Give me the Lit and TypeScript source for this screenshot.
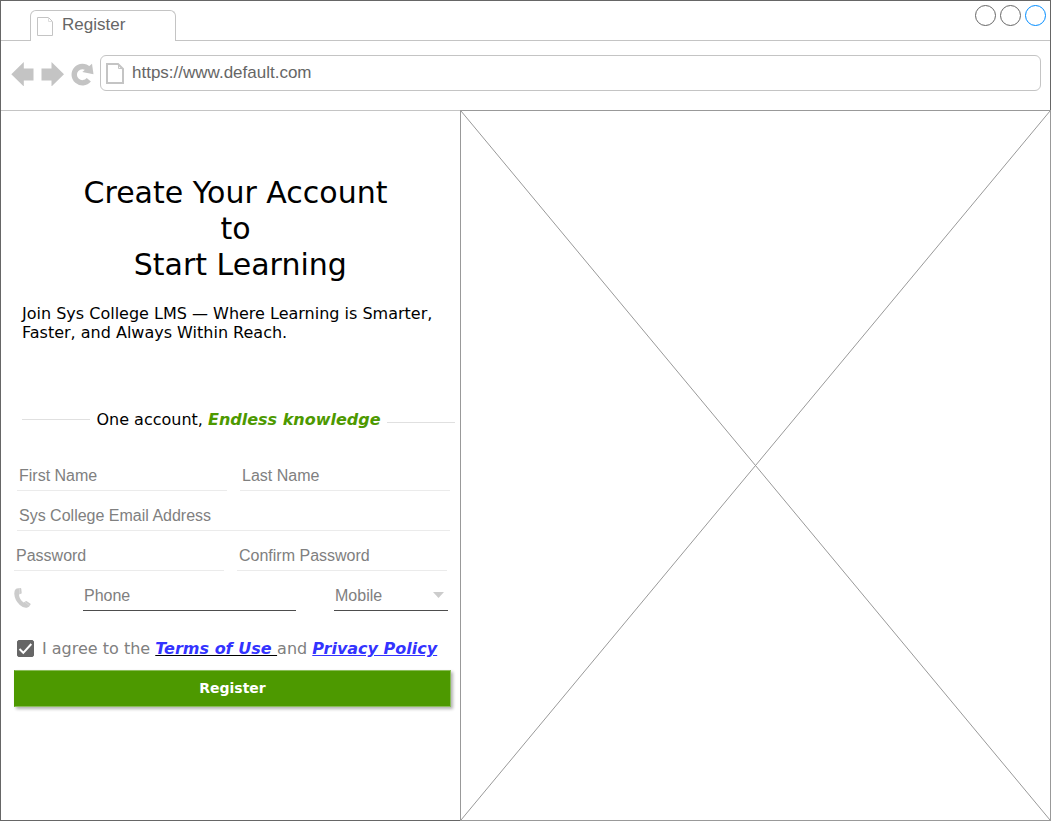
import { LitElement, html, css } from "lit";
import { customElement, state } from "lit/decorators.js";

@customElement("browser-chrome")
class BrowserChrome extends LitElement {
  static styles = css`
    :host {
      display: block;
      font: 17px/20px "Liberation Sans", Arial, sans-serif;
      color: #666;
    }
    svg { display: block; flex: none; }
    .strip { display: flex; height: 40px; }
    .lead { width: 29px; border-bottom: 1px solid #c4c4c4; box-sizing: border-box; }
    .tab {
      display: flex;
      gap: 9px;
      box-sizing: border-box;
      width: 146px;
      margin: 9px 0 0;
      padding: 4px 6px 0;
      border: 1px solid #c4c4c4;
      border-bottom: 0;
      border-radius: 6px 6px 0 0;
    }
    .tab svg { margin-top: 2px; }
    .rest {
      display: flex;
      flex: 1;
      justify-content: flex-end;
      gap: 4px;
      box-sizing: border-box;
      padding: 4px 4px 0;
      border-bottom: 1px solid #c4c4c4;
    }
    .dot {
      box-sizing: border-box;
      width: 21px;
      height: 21px;
      padding: 0;
      border: 1px solid #666;
      border-radius: 50%;
      background: none;
    }
    .accent { border-color: #008cff; }
    .bar {
      display: flex;
      align-items: center;
      padding: 14px 9px 19px 9px;
      border-bottom: 1px solid #c4c4c4;
    }
    .nav { border: 0; padding: 0; margin: 0 6px 0 0; background: none; }
    .address {
      display: flex;
      flex: 1;
      align-items: center;
      gap: 8px;
      box-sizing: border-box;
      height: 36px;
      padding: 0 5px;
      border: 1px solid #c4c4c4;
      border-radius: 6px;
    }
    .url {
      flex: 1;
      min-width: 0;
      height: 20px;
      padding: 0;
      border: 0;
      outline: 0;
      background: none;
      color: inherit;
      font: inherit;
    }
  `;

  render() {
    return html`
      <div class="strip">
        <div class="lead"></div>
        <div class="tab">
          <svg width="16" height="19" viewBox="0 0 16 19" fill="none" stroke="#c4c4c4">
            <path d="M.5.5H11.5L15.5 4.5V18.5H.5Z" />
            <path d="M11.5.5V4.5H15.5" stroke="#ddd" />
          </svg>
          <span>Register</span>
        </div>
        <div class="rest">
          <button class="dot" aria-label="Minimize"></button>
          <button class="dot" aria-label="Maximize"></button>
          <button class="dot accent" aria-label="Close"></button>
        </div>
      </div>
      <div class="bar">
        <button class="nav" aria-label="Back">
          <svg width="24" height="26" viewBox="0 0 24 26" fill="#c4c4c4">
            <path d="M1.300 14.300L13.800 2V8.500H23.500V20.500H13.800V26.500Z" />
          </svg>
        </button>
        <button class="nav" aria-label="Forward">
          <svg width="24" height="26" viewBox="0 0 24 26" fill="#c4c4c4">
            <path d="M24 14.300L11.500 2V8.500H1.500V20.500H11.500V26.500Z" />
          </svg>
        </button>
        <button class="nav" aria-label="Reload">
          <svg width="24" height="26" viewBox="0 0 24 26">
            <path d="M18.800 19.800A8.200 8.200 0 1 1 18.200 8.800" fill="none" stroke="#c4c4c4" stroke-width="5.400" />
            <path d="M22 3.700L23.500 14.200L12.300 12Z" fill="#c4c4c4" />
          </svg>
        </button>
        <div class="address">
          <svg width="18" height="21" viewBox="0 0 18 21" fill="none" stroke="#c4c4c4" stroke-width="2">
            <path d="M1 1H12L17 6V20H1Z" />
            <path d="M12.500 1V5.500H17" stroke-width="1" />
          </svg>
          <input class="url" type="text" aria-label="Address" value="https://www.default.com" />
        </div>
      </div>
    `;
  }
}

@customElement("register-form")
class RegisterForm extends LitElement {
  static styles = css`
    :host {
      display: block;
      color: #000;
      font: 16px/19px "DejaVu Sans", Verdana, sans-serif;
    }
    svg { display: block; }
    .title {
      margin: 0;
      padding: 64px 0 0 10px;
      font-size: 30px;
      line-height: 36px;
      font-weight: 400;
      text-align: center;
    }
    .intro { margin: 0; padding: 21px 9px 0 21px; }
    .motto {
      display: flex;
      gap: 6px;
      margin: 0;
      padding: 68px 5px 0 21px;
      white-space: nowrap;
    }
    .rule { flex: 1; height: 9px; border-bottom: 1px solid #e0e0e0; }
    .low { height: 12px; }
    .green { color: #4d9900; font-style: italic; font-weight: 700; }
    .form { padding: 32px 9px 0 13px; }
    .row { display: flex; gap: 13px; padding-right: 4px; }
    .inset { padding: 0 1px 0 3px; }
    .field {
      flex: 1;
      min-width: 0;
      box-sizing: border-box;
      height: 30px;
      margin-bottom: 10px;
      padding: 1px 2px 0;
      border: 0;
      border-bottom: 1px solid #ebebeb;
      border-radius: 0;
      outline: 0;
      background: none;
      appearance: none;
      color: #808080;
      font: 16px/20px "Liberation Sans", Arial, sans-serif;
    }
    .field::placeholder { color: #808080; opacity: 1; }
    .dark { border-color: #4d4d4d; padding: 1px 1px 0; }
    .phone { display: grid; grid-template-columns: 69px 1fr 38px 114px; gap: 0; padding-right: 3px; }
    .glyph { margin-top: 7px; }
    .pick { display: grid; grid-column: 4; }
    .pick > * { grid-area: 1 / 1; }
    .caret { justify-self: end; margin: 11px 4px 0 0; pointer-events: none; }
    .agree {
      display: flex;
      align-items: center;
      gap: 8px;
      padding: 18px 0 12px 3px;
      color: #808080;
      white-space: nowrap;
    }
    .tick { display: grid; }
    .tick > * { grid-area: 1 / 1; }
    .box {
      appearance: none;
      width: 17px;
      height: 17px;
      margin: 0;
      border: 1px solid #666;
      border-radius: 2px;
      box-sizing: border-box;
    }
    .box:checked { background: #666; }
    .mark { pointer-events: none; visibility: hidden; }
    .box:checked + .mark { visibility: visible; }
    .link { color: #33f; font-style: italic; font-weight: 700; }
    .terms { text-decoration-color: #000; white-space: pre; }
    .submit {
      display: block;
      width: 100%;
      height: 37px;
      padding: 0 0 1px;
      border: 1px solid #8abc59;
      border-left-color: #4d9900;
      background: #4d9900;
      box-shadow: 2px 2px 3px rgba(0, 0, 0, 0.3);
      color: #fff;
      font: 700 14px/19px "DejaVu Sans", Verdana, sans-serif;
    }
  `;

  @state() agreed = true;

  render() {
    return html`
      <h1 class="title">Create Your Account<br />to<br />&nbsp;Start Learning</h1>
      <p class="intro">Join Sys College LMS — Where Learning is Smarter, Faster, and Always Within Reach.</p>
      <p class="motto">
        <span class="rule"></span>
        <span>One account, <span class="green">Endless knowledge</span></span>
        <span class="rule low"></span>
      </p>
      <form class="form" @submit=${(e: Event) => e.preventDefault()}>
        <div class="row inset">
          <input class="field" type="text" aria-label="First Name" placeholder="First Name" />
          <input class="field" type="text" aria-label="Last Name" placeholder="Last Name" />
        </div>
        <div class="row inset">
          <input class="field" type="email" aria-label="Sys College Email Address" placeholder="Sys College Email Address" />
        </div>
        <div class="row">
          <input class="field" type="password" aria-label="Password" placeholder="Password" />
          <input class="field" type="password" aria-label="Confirm Password" placeholder="Confirm Password" />
        </div>
        <div class="row phone">
          <svg class="glyph" width="17" height="20" viewBox="0 0 17 20" fill="#ccc">
            <path d="M2.800.5L6.400.1Q7.200.1 7.300.9L7.700 4.800Q7.700 5.600 7 5.800L4.900 6.400Q5.400 11.400 9.700 14.600L11.600 13.300Q12.200 12.900 12.800 13.300L16.200 15.600Q16.800 16 16.500 16.700Q15.300 19 12.900 19.700Q9.400 20.300 5.800 17Q.6 12 .3 6Q.2 2.300 1.800.9Q2.200.5 2.800.5Z" />
            <path d="M5.300.3L5.800 6M10.800 14L15.600 17.600" fill="none" stroke="#fff" stroke-opacity=".45" stroke-width=".6" />
          </svg>
          <input class="field dark" type="tel" aria-label="Phone" placeholder="Phone" />
          <div class="pick">
            <select class="field dark" aria-label="Phone type">
              <option>Mobile</option>
              <option>Home</option>
              <option>Work</option>
            </select>
            <svg class="caret" width="11" height="6" viewBox="0 0 11 6"><path d="M0 0H11L5.500 6Z" fill="#ccc" /></svg>
          </div>
        </div>
        <div class="agree">
          <span class="tick">
            <input
              class="box"
              id="agree"
              type="checkbox"
              .checked=${this.agreed}
              @change=${(e: Event) => (this.agreed = (e.target as HTMLInputElement).checked)}
            />
            <svg class="mark" width="17" height="17" viewBox="0 0 17 17" fill="none" stroke="#fff" stroke-width="2">
              <path d="M2.500 9L6.300 12.800L14.300 4" />
            </svg>
          </span>
          <label for="agree">I agree to the <a class="link terms" href="#terms">Terms of Use </a>and <a class="link" href="#privacy">Privacy Policy</a></label>
        </div>
        <button class="submit" type="submit">Register</button>
      </form>
    `;
  }
}

@customElement("app-root")
class AppRoot extends LitElement {
  static styles = css`
    :host {
      display: flex;
      flex-direction: column;
      box-sizing: border-box;
      min-height: 100vh;
      border: 1px solid #666;
      background: #fff;
    }
    .page {
      display: grid;
      flex: 1;
      grid-template-columns: minmax(0, 459fr) minmax(0, 590fr);
    }
    .picture {
      display: grid;
      margin: -1px -1px -1px 0;
      border: 1px solid #999;
      overflow: hidden;
    }
    .cross { display: block; width: 100%; height: 100%; min-height: 0; contain: size; }
  `;

  render() {
    return html`
      <browser-chrome></browser-chrome>
      <main class="page">
        <register-form></register-form>
        <div class="picture">
          <svg class="cross" viewBox="0 0 100 100" preserveAspectRatio="none" stroke="#999">
            <path d="M0 0L100 100M100 0L0 100" vector-effect="non-scaling-stroke" />
          </svg>
        </div>
      </main>
    `;
  }
}
